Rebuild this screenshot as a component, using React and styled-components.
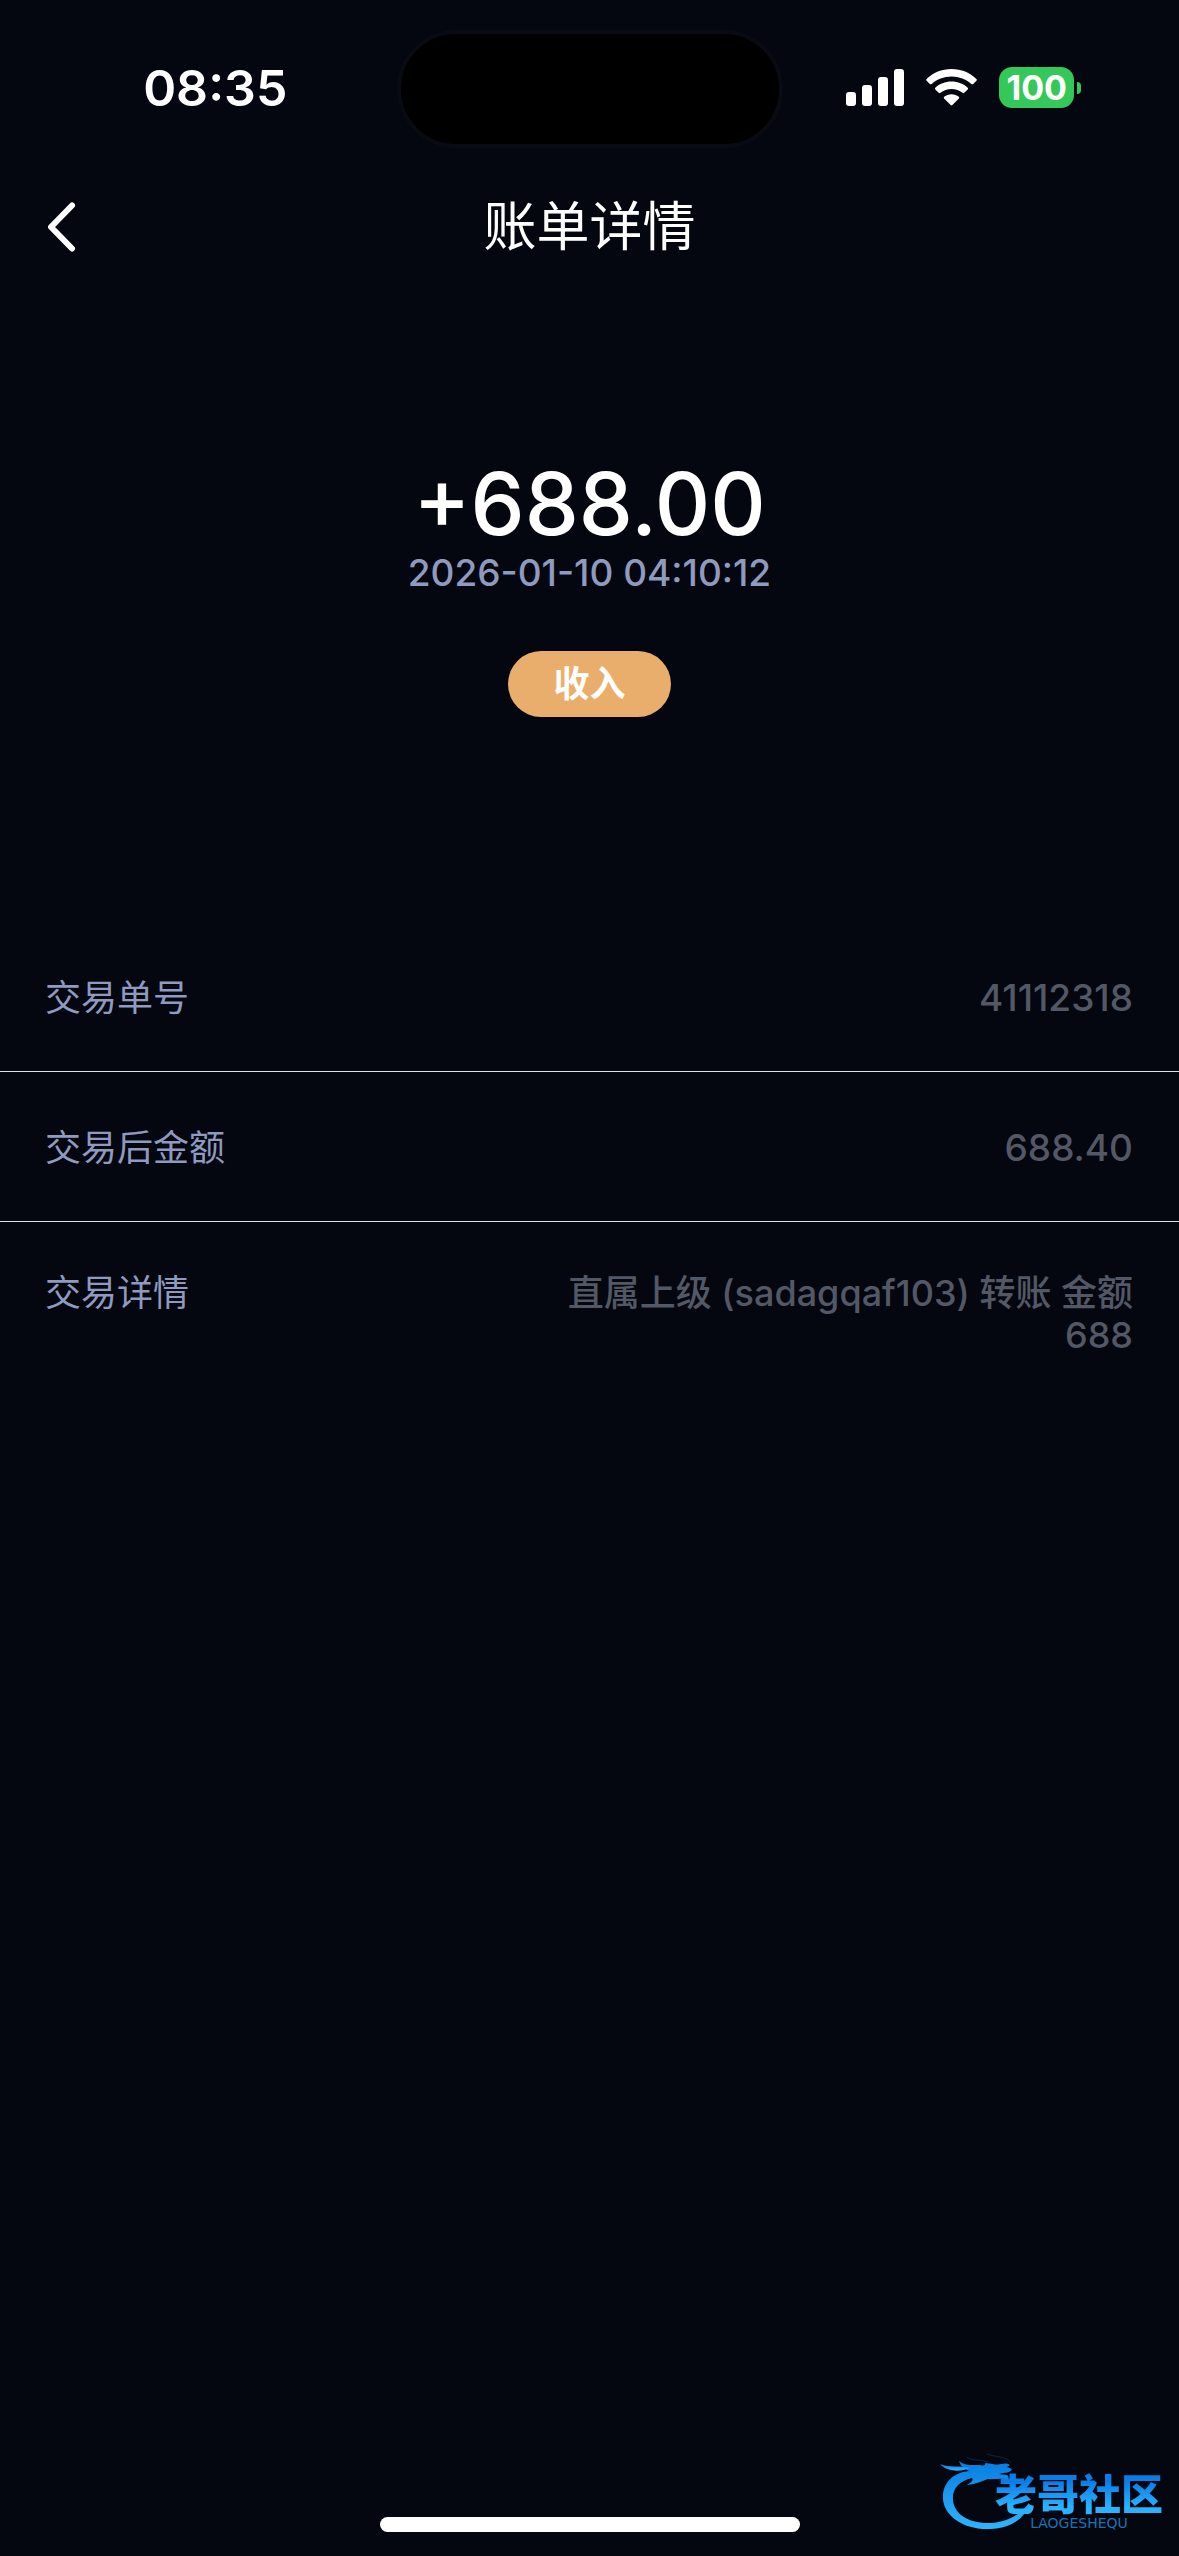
import React from "react";
import styled, { createGlobalStyle } from "styled-components";

const GlobalStyle = createGlobalStyle`
  * { box-sizing: border-box; }
  body {
    margin: 0;
    background: #04070f;
    color: #fff;
    font-family: Inter, "Noto Sans CJK SC", sans-serif;
  }
`;

const Page = styled.div`
  position: relative;
  display: flex;
  flex-direction: column;
  min-height: 100vh;
`;

const StatusBar = styled.div`
  display: grid;
  grid-template-columns: 1fr auto 1fr;
  align-items: center;
  padding: 30px 34px 28px;
`;

const Island = styled.div`
  width: 386px;
  height: 118px;
  border: 4px solid #080b11;
  border-radius: 59px;
  background: #000;
`;

const Time = styled.time`
  justify-self: center;
  padding-bottom: 3px;
  font-size: 50px;
  font-weight: 600;
  line-height: 60px;
`;

const StatusIcons = styled.div`
  justify-self: center;
  display: flex;
  align-items: center;
  gap: 22px;
  padding-bottom: 3px;
`;

const Battery = styled.div`
  display: flex;
  align-items: center;
  gap: 3px;
`;

const BatteryLevel = styled.span`
  width: 75px;
  height: 41px;
  border-radius: 13px;
  background: #34c759;
  font-size: 34px;
  font-weight: 700;
  line-height: 41px;
  text-align: center;
`;

const BatteryTip = styled.span`
  width: 4px;
  height: 12px;
  border-radius: 0 4px 4px 0;
  background: #34c759;
`;

const Header = styled.header`
  display: grid;
  grid-template-columns: 1fr auto 1fr;
  align-items: center;
  height: 102px;
  padding: 0 36px;
`;

const BackButton = styled.button`
  display: flex;
  justify-self: start;
  padding: 12px;
  border: 0;
  background: none;
  color: inherit;
`;

const Title = styled.h1`
  margin: 0;
  font-size: 53px;
  font-weight: 400;
  line-height: 80px;
`;

const Summary = styled.section`
  display: flex;
  flex-direction: column;
  align-items: center;
  padding: 184px 45px 205px;
`;

const Amount = styled.div`
  font-size: 86px;
  font-weight: 500;
  line-height: 84px;
`;

const DateText = styled.time`
  margin-bottom: 51px;
  color: #8f9abf;
  font-size: 37px;
  font-weight: 500;
  line-height: 54px;
`;

const Tag = styled.span`
  padding: 0 45px;
  border-radius: 33px;
  background: #e9ae6c;
  font-size: 36px;
  font-weight: 700;
  line-height: 66px;
`;

const Details = styled.dl`
  margin: 0;
`;

const Row = styled.div`
  display: flex;
  justify-content: space-between;
  padding: 55px 46px 52px 45px;
  border-bottom: 1px solid #dfe2e2;
  font-size: 36px;
  line-height: 42px;

  &:last-child {
    padding-top: 50px;
    border-bottom: 0;
  }
`;

const Label = styled.dt`
  color: #8f9abf;
`;

const Value = styled.dd`
  max-width: 55%;
  margin: 0;
  color: #535866;
  font-size: ${(p) => (p.$numeric ? "37px" : "36px")};
  font-weight: 500;
  text-align: right;
`;

const HomeIndicator = styled.div`
  width: 420px;
  height: 15px;
  margin: auto auto 24px;
  border-radius: 8px;
  background: #fff;
`;

const Watermark = styled.div`
  position: absolute;
  right: 16px;
  bottom: 20px;
  width: 224px;
  height: 84px;
`;

const Dragon = styled.svg`
  position: absolute;
  inset: 0;
`;

const Wordmark = styled.div`
  position: absolute;
  right: 0;
  bottom: 6px;
  display: flex;
  flex-direction: column;
  align-items: center;
`;

const BrandName = styled.span`
  background: linear-gradient(#0a7de6 20%, #2bb2ff 80%);
  background-clip: text;
  color: transparent;
  font-size: 42px;
  font-weight: 900;
  line-height: 43px;
`;

const BrandLatin = styled.span`
  color: #1673b8;
  font-family: "DejaVu Sans", sans-serif;
  font-size: 14px;
  line-height: 14px;
`;

const rows = [
  { label: "交易单号", value: "41112318", numeric: true },
  { label: "交易后金额", value: "688.40", numeric: true },
  { label: "交易详情", value: "直属上级 (sadagqaf103) 转账 金额 688", numeric: false },
];

function SignalIcon() {
  return (
    <svg width="58" height="37" viewBox="0 0 58 37" fill="#fff" aria-hidden="true">
      <rect x="0" y="23" width="10" height="14" rx="3" />
      <rect x="16" y="16" width="10" height="21" rx="3" />
      <rect x="32" y="8" width="10" height="29" rx="3" />
      <rect x="48" y="0" width="10" height="37" rx="3" />
    </svg>
  );
}

function WifiIcon() {
  return (
    <svg width="51" height="37" viewBox="0 0 51 37" fill="#fff" aria-hidden="true">
      <path d="M25.5 0C35.2 0 44 3.7 50.4 9.900Q51.300 10.800 50.400 11.700L47.200 14.900Q46.300 15.800 45.300 14.900C40 10.200 33.200 7.400 25.500 7.400S11 10.200 5.700 14.900Q4.700 15.800 3.800 14.900L.6 11.700Q-.3 10.800 .6 9.900C7 3.700 15.800 0 25.500 0Z" />
      <path d="M25.500 12.600C31.800 12.600 37.500 14.900 41.700 18.800Q42.500 19.600 41.700 20.500L38.300 23.800Q37.500 24.600 36.500 23.800C33.500 21.300 29.700 19.900 25.500 19.900S17.500 21.300 14.500 23.800Q13.500 24.600 12.700 23.800L9.300 20.500Q8.500 19.600 9.300 18.800C13.500 14.900 19.200 12.600 25.500 12.600Z" />
      <path d="M25.500 25.200C28.300 25.200 30.800 26.100 32.800 27.700Q33.700 28.500 32.900 29.400L26.400 36Q25.500 36.900 24.600 36L18.100 29.400Q17.300 28.500 18.200 27.700C20.200 26.100 22.700 25.200 25.500 25.200Z" />
    </svg>
  );
}

function BackIcon() {
  return (
    <svg width="28" height="50" viewBox="0 0 28 50" fill="none" stroke="#fff" strokeWidth="6" strokeLinecap="round" strokeLinejoin="round" aria-hidden="true">
      <path d="M24 3.500L3 25L24 46.500" />
    </svg>
  );
}

function DragonMark() {
  return (
    <Dragon width="224" height="84" viewBox="0 0 224 84" aria-hidden="true">
      <defs>
        <linearGradient id="dragon" x1="0" y1="0" x2="0" y2="1">
          <stop offset="0" stopColor="#087cdf" />
          <stop offset="1" stopColor="#2eb5ff" />
        </linearGradient>
      </defs>
      <g fill="url(#dragon)">
        <path d="M30 19C12 21 3 33 4 47C5 63 23 78 51 77C71 76 87 67 90 51C80 64 67 70 52 71C30 72 15 62 14 48C13 37 20 29 33 26C35 29 31 31 28 33C37 32 43 29 49 27C56 28 62 25 68 28C70 27 70 24 68 23L60 22C65 20 71 22 73 17L68 15L71 13C66 9 60 14 54 12L46 11C47 13 44 14 41 13C34 13 26 14 20 9C21 13 24 16 30 19Z" />
        <path d="M1 12C11 16 19 13 31 16C22 20 8 20 1 12Z" />
      </g>
      <path d="M28 5C32 9 40 7 49 10M48 2C55 5 68 4 72 11" fill="none" stroke="#092747" strokeWidth="1" />
    </Dragon>
  );
}

export default function App() {
  return (
    <Page>
      <GlobalStyle />
      <StatusBar>
        <Time>08:35</Time>
        <Island />
        <StatusIcons>
          <SignalIcon />
          <WifiIcon />
          <Battery>
            <BatteryLevel>100</BatteryLevel>
            <BatteryTip />
          </Battery>
        </StatusIcons>
      </StatusBar>
      <Header>
        <BackButton type="button" aria-label="返回">
          <BackIcon />
        </BackButton>
        <Title>账单详情</Title>
      </Header>
      <main>
        <Summary>
          <Amount>+688.00</Amount>
          <DateText>2026-01-10 04:10:12</DateText>
          <Tag>收入</Tag>
        </Summary>
        <Details>
          {rows.map(({ label, value, numeric }) => (
            <Row key={label}>
              <Label>{label}</Label>
              <Value $numeric={numeric}>{value}</Value>
            </Row>
          ))}
        </Details>
      </main>
      <HomeIndicator />
      <Watermark>
        <DragonMark />
        <Wordmark>
          <BrandName>老哥社区</BrandName>
          <BrandLatin>LAOGESHEQU</BrandLatin>
        </Wordmark>
      </Watermark>
    </Page>
  );
}
